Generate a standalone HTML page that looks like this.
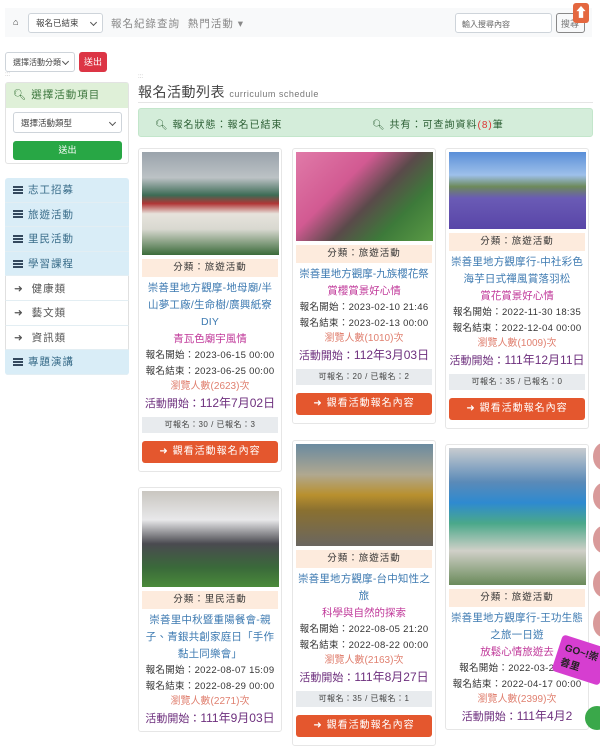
<!DOCTYPE html>
<html><head><meta charset="utf-8"><style>
*{box-sizing:border-box;margin:0;padding:0}
body{width:600px;height:724px;overflow:hidden;background:#fff;font-family:"Liberation Sans","Noto Sans CJK TC",sans-serif;color:#333;position:relative;font-size:10px}
.a{position:absolute}
.nav{left:5px;top:8px;width:587px;height:29px;background:#f8f9fa}
.sel{border:1px solid #ced4da;border-radius:3px;background:#fff;font-size:9px;color:#444;padding-left:7px;display:flex;align-items:center}
.sel:after{content:"";position:absolute;right:6px;top:50%;width:4px;height:4px;margin-top:-3px;border-right:1px solid #555;border-bottom:1px solid #555;transform:rotate(45deg)}
.menu div{height:24.6px;border-bottom:1px solid #e3eef3;display:flex;align-items:center;padding-left:8px;font-size:10.5px;color:#3a6d8a;letter-spacing:1px}
.menu .b{background:#d9edf7}
.menu .w{background:#fff;color:#555;border-left:1px solid #e0e0e0;border-right:1px solid #e0e0e0}
.ham{display:inline-block;width:10px;height:8px;margin-right:5px;background:linear-gradient(#34495e 0 2px,transparent 2px 3px,#34495e 3px 5px,transparent 5px 6px,#34495e 6px 8px)}
.card{position:absolute;width:144px;border:1px solid #e6e6e6;border-radius:3px;background:#fff;padding:3px;text-align:center}
.img{width:137px}
.cat{background:#fdebdd;height:18px;line-height:18px;font-size:9.5px;color:#333;margin-top:4px;letter-spacing:1px}
.t{color:#3d7ab1;font-size:10.5px;line-height:17px;margin-top:3px;letter-spacing:.2px}
.s{color:#c0399a;font-size:10.5px;line-height:17px}
.d{font-size:9.5px;line-height:15.5px;color:#333;letter-spacing:.3px}
.v{color:#e08070;font-size:10px;line-height:16px}
.ac{color:#6d2f7d;font-size:11px;line-height:17px}
.ac b{font-weight:normal;font-size:12px}
.r{background:#e8ebee;height:16px;line-height:16px;font-size:8px;color:#444;margin-top:4px;letter-spacing:.5px}
.btn{background:#e4572e;color:#fff;height:22px;line-height:22px;font-size:10px;margin-top:8px;border-radius:3px;letter-spacing:1px;margin-bottom:5px}
.pk{position:absolute;left:593px;width:20px;height:27px;border-radius:50%;background:#d99a9a}
</style></head><body>
<div class="a nav"></div>
<div class="a" style="left:13px;top:17px;font-size:9px">&#8962;</div>
<div class="a sel" style="left:28px;top:13px;width:75px;height:20px;font-size:8.5px">報名已結束</div>
<div class="a" style="left:111px;top:16px;font-size:10.5px;color:#888;letter-spacing:1px">報名紀錄查詢&nbsp;&nbsp;熱門活動 ▾</div>
<div class="a" style="left:455px;top:13px;width:97px;height:20px;border:1px solid #ced4da;border-radius:3px;background:#fff;font-size:8px;color:#666;padding:5px 0 0 6px">輸入搜尋內容</div>
<div class="a" style="left:556px;top:13px;width:29px;height:20px;border:1px solid #888;border-radius:3px;font-size:9px;color:#777;padding:3px 0 0 4px">搜尋</div>
<div class="a" style="left:573px;top:3px;width:16px;height:20px;background:#e4673f;border-radius:3px;color:#fff;font-size:13px;text-align:center;line-height:20px">⬆</div>

<div class="a sel" style="left:5px;top:52px;width:70px;height:20px;font-size:8px">選擇活動分類</div>
<div class="a" style="left:79px;top:52px;width:28px;height:20px;background:#dc3545;border-radius:3px;color:#fff;font-size:9px;text-align:center;line-height:20px">送出</div>
<div class="a" style="left:5px;top:72px;font-size:6px;color:#aaa">:::</div>

<div class="a" style="left:5px;top:82px;width:124px;height:82px;border:1px solid #e3e3e3;border-radius:3px"></div>
<div class="a" style="left:6px;top:83px;width:122px;height:25px;background:#dff0d8;color:#3c763d;font-size:10.5px;line-height:25px;padding-left:7px;letter-spacing:1px">&#x1F50D;&#xFE0E; 選擇活動項目</div>
<div class="a sel" style="left:13px;top:112px;width:109px;height:21px;font-size:8.5px">選擇活動類型</div>
<div class="a" style="left:13px;top:141px;width:109px;height:19px;background:#28a745;border-radius:3px;color:#fff;font-size:9px;text-align:center;line-height:19px">送出</div>

<div class="a menu" style="left:5px;top:178px;width:124px;border-radius:3px;overflow:hidden">
<div class="b"><span class="ham"></span>志工招募</div>
<div class="b"><span class="ham"></span>旅遊活動</div>
<div class="b"><span class="ham"></span>里民活動</div>
<div class="b"><span class="ham"></span>學習課程</div>
<div class="w">➜&nbsp; 健康類</div>
<div class="w">➜&nbsp; 藝文類</div>
<div class="w">➜&nbsp; 資訊類</div>
<div class="b"><span class="ham"></span>專題演講</div>
</div>

<div class="a" style="left:138px;top:74px;font-size:6px;color:#aaa">:::</div>
<div class="a" style="left:138px;top:82px;font-size:14px;color:#444;letter-spacing:.5px">報名活動列表 <span style="font-size:9px;color:#777">curriculum schedule</span></div>
<div class="a" style="left:138px;top:102px;width:455px;border-top:1px solid #e5e5e5"></div>
<div class="a" style="left:138px;top:108px;width:455px;height:29px;background:#d4edda;border:1px solid #c3e6cb;border-radius:3px"></div>
<div class="a" style="left:155px;top:116px;font-size:10px;color:#2c5f34;letter-spacing:1px">🔍&#xFE0E; 報名狀態：報名已結束</div>
<div class="a" style="left:372px;top:116px;font-size:10px;color:#2c5f34;letter-spacing:1px">🔍&#xFE0E; 共有：可查詢資料<span style="color:#d33">(8)</span>筆</div>

<div class="card" style="left:138px;top:148px">
<div class="img" style="height:103px;background:linear-gradient(180deg,#9aa3ab 0,#bcc2c5 25%,#3c6b55 42%,#b03535 50%,#e7e3dc 60%,#d8d8d0 75%,#3b6b3a 100%)"></div>
<div class="cat">分類：旅遊活動</div>
<div class="t">崇善里地方觀摩-地母廟/半<br>山夢工廠/生命樹/廣興紙寮<br>DIY</div>
<div class="s">青瓦色廟宇風情</div>
<div class="d">報名開始：2023-06-15 00:00</div>
<div class="d">報名結束：2023-06-25 00:00</div>
<div class="v">瀏覽人數(2623)次</div>
<div class="ac">活動開始：<b>112年7月02日</b></div>
<div class="r">可報名：30 / 已報名：3</div>
<div class="btn">➜ 觀看活動報名內容</div>
</div>

<div class="card" style="left:292px;top:148px">
<div class="img" style="height:89px;background:linear-gradient(135deg,#e07aa8 0,#d25a92 35%,#5a4a4a 55%,#3d7a3a 75%,#5a9a45 100%)"></div>
<div class="cat">分類：旅遊活動</div>
<div class="t" style="white-space:nowrap;letter-spacing:0">崇善里地方觀摩-九族櫻花祭</div>
<div class="s">賞櫻賞景好心情</div>
<div class="d">報名開始：2023-02-10 21:46</div>
<div class="d">報名結束：2023-02-13 00:00</div>
<div class="v">瀏覽人數(1010)次</div>
<div class="ac">活動開始：<b>112年3月03日</b></div>
<div class="r">可報名：20 / 已報名：2</div>
<div class="btn">➜ 觀看活動報名內容</div>
</div>

<div class="card" style="left:445px;top:148px">
<div class="img" style="height:77px;background:linear-gradient(180deg,#5a8fd8 0,#9ec0ea 30%,#6d8a5a 45%,#6a5bb5 60%,#5945a8 100%)"></div>
<div class="cat">分類：旅遊活動</div>
<div class="t">崇善里地方觀摩行-中社彩色<br>海芋日式禪風賞落羽松</div>
<div class="s">賞花賞景好心情</div>
<div class="d">報名開始：2022-11-30 18:35</div>
<div class="d">報名結束：2022-12-04 00:00</div>
<div class="v">瀏覽人數(1009)次</div>
<div class="ac">活動開始：<b>111年12月11日</b></div>
<div class="r">可報名：35 / 已報名：0</div>
<div class="btn">➜ 觀看活動報名內容</div>
</div>

<div class="card" style="left:138px;top:487px">
<div class="img" style="height:96px;background:linear-gradient(180deg,#c9c6c0 0,#e8e8ea 30%,#4a4a50 55%,#3a6a3a 80%,#4a8a3a 100%)"></div>
<div class="cat">分類：里民活動</div>
<div class="t">崇善里中秋暨重陽餐會-親<br>子、青銀共創家庭日「手作<br>黏土同樂會」</div>
<div class="d">報名開始：2022-08-07 15:09</div>
<div class="d">報名結束：2022-08-29 00:00</div>
<div class="v">瀏覽人數(2271)次</div>
<div class="ac">活動開始：<b>111年9月03日</b></div>
</div>

<div class="card" style="left:292px;top:440px">
<div class="img" style="height:102px;background:linear-gradient(180deg,#6a8aa0 0,#b0a890 30%,#b8902e 50%,#8a7030 65%,#6a6660 100%)"></div>
<div class="cat">分類：旅遊活動</div>
<div class="t">崇善里地方觀摩-台中知性之<br>旅</div>
<div class="s">科學與自然的探索</div>
<div class="d">報名開始：2022-08-05 21:20</div>
<div class="d">報名結束：2022-08-22 00:00</div>
<div class="v">瀏覽人數(2163)次</div>
<div class="ac">活動開始：<b>111年8月27日</b></div>
<div class="r">可報名：35 / 已報名：1</div>
<div class="btn">➜ 觀看活動報名內容</div>
</div>

<div class="card" style="left:445px;top:444px">
<div class="img" style="height:137px;background:linear-gradient(180deg,#c8ccd0 0,#5a8ab8 25%,#2e8ad0 40%,#4aa88a 55%,#d0d0c8 75%,#6a8a5a 100%)"></div>
<div class="cat">分類：旅遊活動</div>
<div class="t">崇善里地方觀摩行-王功生態<br>之旅一日遊</div>
<div class="s">放鬆心情旅遊去</div>
<div class="d">報名開始：2022-03-2&nbsp;&nbsp;&nbsp;&nbsp;&nbsp;&nbsp;&nbsp;</div>
<div class="d">報名結束：2022-04-17 00:00</div>
<div class="v">瀏覽人數(2399)次</div>
<div class="ac">活動開始：<b>111年4月2</b></div>
</div>
<div class="a" style="left:556px;top:641px;width:50px;height:38px;background:#d63ed0;transform:rotate(18deg);border-radius:4px;color:#222;font-size:10px;font-weight:bold;padding:3px 0 0 6px">GO~!崇善里</div>
<div class="a" style="left:585px;top:706px;width:24px;height:24px;border-radius:50%;background:#3aa84a"></div>
<div class="pk" style="top:443px"></div><div class="pk" style="top:483px"></div><div class="pk" style="top:526px"></div><div class="pk" style="top:570px"></div><div class="pk" style="top:610px"></div>
</body></html>
